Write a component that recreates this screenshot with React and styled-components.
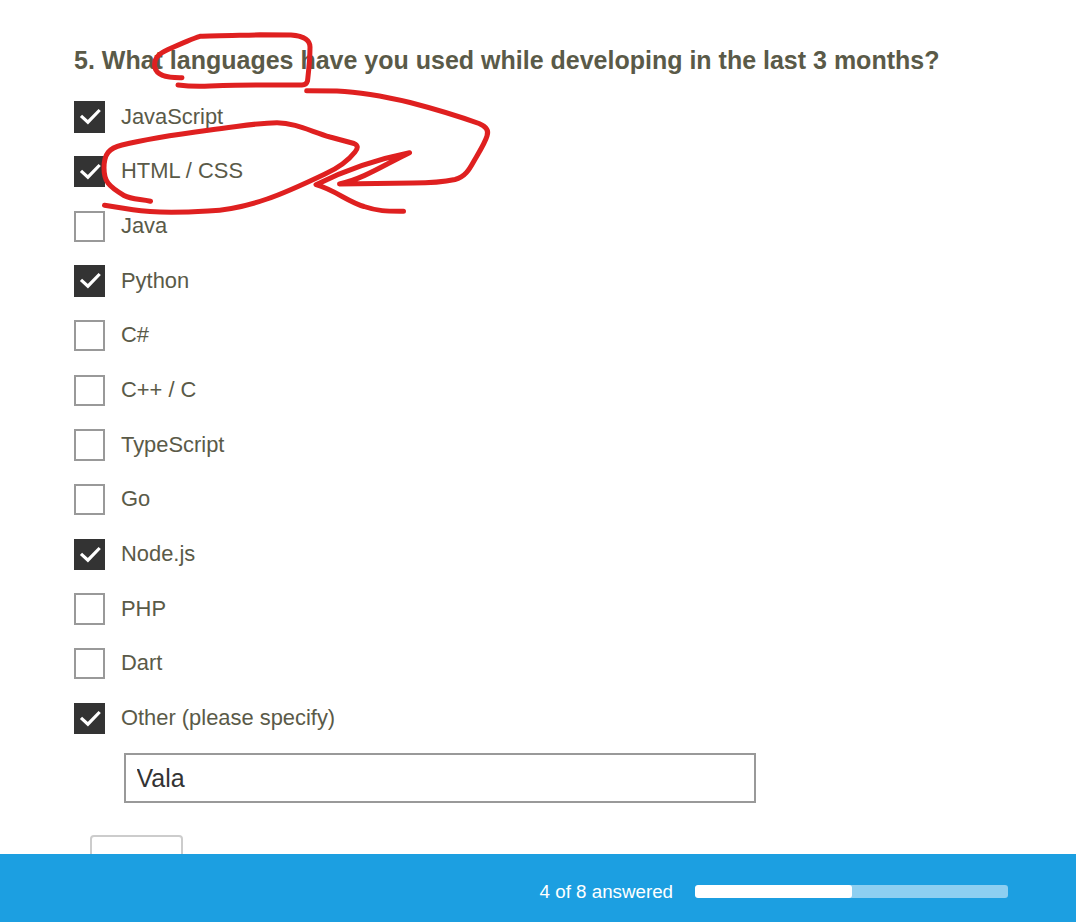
import React from "react";
import styled, { createGlobalStyle } from "styled-components";

const GlobalStyle = createGlobalStyle`
  html, body { margin: 0; padding: 0; background: #fff; overflow: hidden; }
  *, *::before, *::after { box-sizing: border-box; }
  body, input, button { font-family: "Liberation Sans", Arial, sans-serif; }
`;

const Page = styled.div`
  position: relative;
  display: flex;
  flex-direction: column;
  height: 922px;
  width: 1076px;
  overflow: hidden;
  background: #fff;
`;

const Survey = styled.main`
  flex: 1;
  min-height: 0;
  overflow: hidden;
  padding: 45px 74px 0;
`;

const Question = styled.h1`
  margin: 0;
  font-size: 25px;
  line-height: 30px;
  font-weight: 700;
  color: #5a5a48;
  white-space: nowrap;
`;

const Options = styled.ul`
  list-style: none;
  margin: 26.2px 0 0;
  padding: 0;
  display: flex;
  flex-direction: column;
  gap: 23.34px;
`;

const Option = styled.li`
  display: flex;
  align-items: flex-start;
  gap: 16px;
  height: 31.35px;
`;

const Box = styled.span`
  display: flex;
  align-items: center;
  justify-content: center;
  flex: none;
  width: 31px;
  height: 31.35px;
  background: ${(p) => (p.$checked ? "#333" : "#fff")};
  border: 2px solid ${(p) => (p.$checked ? "#333" : "#999")};
`;

const Label = styled.span`
  margin-top: 0.5px;
  font-size: 21.9px;
  line-height: 30px;
  color: #5a5a48;
  white-space: nowrap;
`;

const OtherInput = styled.input`
  display: block;
  width: 632px;
  height: 50px;
  margin: 19px 0 0 50px;
  padding: 2px 11px 0 10.5px;
  border: 2px solid #999;
  border-radius: 0;
  outline: none;
  background: #fff;
  color: #333;
  font-size: 25px;
`;

const NextButton = styled.button`
  display: block;
  width: 93px;
  height: 50px;
  margin: 32px 0 0 16px;
  border: 2px solid #ccc;
  border-radius: 4px;
  background: #fff;
`;

const Footer = styled.footer`
  flex: none;
  display: flex;
  align-items: center;
  justify-content: flex-end;
  gap: 22px;
  height: 68px;
  padding: 7px 68px 0 0;
  background: #1c9fe1;
`;

const Answered = styled.span`
  font-size: 18.75px;
  line-height: 22px;
  color: #fff;
`;

const Track = styled.div`
  width: 313px;
  height: 13px;
  border-radius: 3px;
  background: #8dcff1;
  overflow: hidden;
`;

const Progress = styled.div`
  width: ${(p) => p.$percent}%;
  height: 100%;
  border-radius: 3px;
  background: #fff;
`;

const Ink = styled.svg`
  position: absolute;
  left: 0;
  top: 0;
  pointer-events: none;
  fill: none;
  stroke: #df2020;
  stroke-width: 5;
  stroke-linecap: round;
  stroke-linejoin: round;
`;

const TickIcon = styled.svg`
  flex: none;
  display: block;
`;

const Tick = () => (
  <TickIcon width="27" height="27" viewBox="0 0 27 27" fill="none">
    <path d="M5 12.9 L11.9 19.2 L23.7 7" stroke="#fff" strokeWidth="3.2" />
  </TickIcon>
);

const options = [
  ["JavaScript", true],
  ["HTML / CSS", true],
  ["Java", false],
  ["Python", true],
  ["C#", false],
  ["C++ / C", false],
  ["TypeScript", false],
  ["Go", false],
  ["Node.js", true],
  ["PHP", false],
  ["Dart", false],
  ["Other (please specify)", true],
];

export default function App() {
  return (
    <Page>
      <GlobalStyle />
      <Survey>
        <Question>5. What languages have you used while developing in the last 3 months?</Question>
        <Options>
          {options.map(([name, checked]) => (
            <Option key={name}>
              <Box $checked={checked}>{checked && <Tick />}</Box>
              <Label>{name}</Label>
            </Option>
          ))}
        </Options>
        <OtherInput defaultValue="Vala" />
        <NextButton />
      </Survey>
      <Footer>
        <Answered>4 of 8 answered</Answered>
        <Track>
          <Progress $percent={50} />
        </Track>
      </Footer>
      <Ink width="1076" height="300" viewBox="0 0 1076 300">
        <path d="M182 77.7 C167 78 157 75 155 68 C153 59 158 54 168 49.5 C180 44 191 39 200 36.3 C212 35.4 236 35.3 260 34.8 L291 35 C303 36 310 40 310 47 C310 61 308.5 72 307.5 81 Q306.5 85 302 85 L260 85 C240 85 225 85.5 210 86 C200 86.5 190 86.5 178 85" />
        <path d="M150.5 201.3 C140 199 131 199.5 124 195.5 C108 186 104 181 104 168 C104 154 109 148 122 145 C150 138 180 134 210 130 C240 126.5 258 122.7 277 122.7 C295 123 310 131 330 137 L354 143.5 Q360 146 355 152 C348 161 336 169 325 174 C302 185 285 193 267 199 C247 206 231 210 208 211 C182 212.5 150 212.5 133 209.8 L104.5 205.3" />
        <path d="M306.7 90.7 L337 91 C362 92 387 97 410 102.5 C435 109 458 116 479 123.5 Q490 128 487 136 C485 143 478 154 474 161 C469 170 465 177 455 179.5 C441 182.5 428 183 413 183 L339.5 184 C363 179 384 165 409.5 152.7 C378 159 343 171 316 184.7 C335 190 348 202 364 206.5 C379 211.5 387 211.2 403.5 211.2" />
      </Ink>
    </Page>
  );
}
